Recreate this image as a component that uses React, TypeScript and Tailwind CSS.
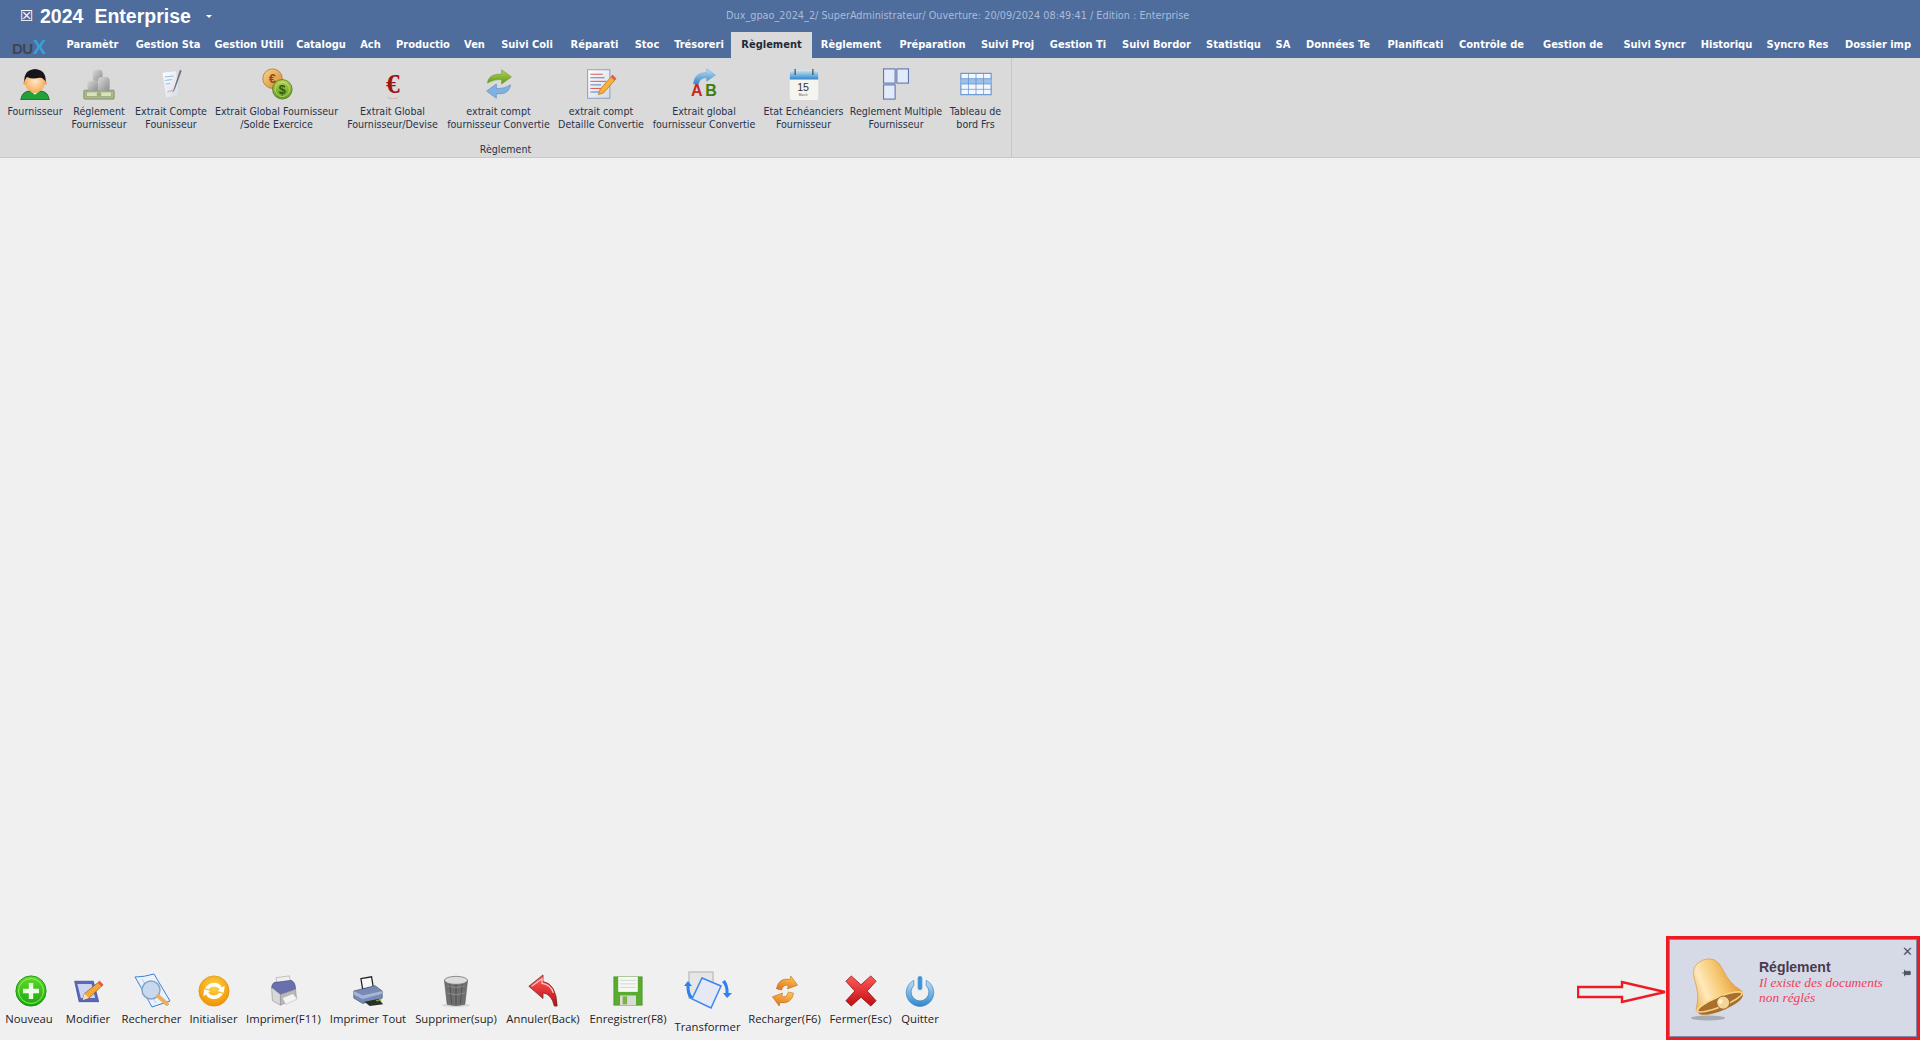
import React from "react";

const uiFont = "font-['DejaVu_Sans'] [font-stretch:condensed]";

const tabs = [
	{ label: "Paramètr", w: "w-[71px]" },
	{ label: "Gestion Sta", w: "w-[80px]" },
	{ label: "Gestion Utili", w: "w-[82px]" },
	{ label: "Catalogu", w: "w-[62px]" },
	{ label: "Ach", w: "w-[37px]" },
	{ label: "Productio", w: "w-[68px]" },
	{ label: "Ven", w: "w-[35px]" },
	{ label: "Suivi Coli", w: "w-[70px]" },
	{ label: "Réparati", w: "w-[65px]" },
	{ label: "Stoc", w: "w-[40px]" },
	{ label: "Trésoreri", w: "w-[64px]" },
	{ label: "Règlement", w: "w-[81px]", active: true },
	{ label: "Règlement", w: "w-[78px]" },
	{ label: "Préparation", w: "w-[85px]" },
	{ label: "Suivi Proj", w: "w-[65px]" },
	{ label: "Gestion Ti", w: "w-[76px]" },
	{ label: "Suivi Bordor", w: "w-[81px]" },
	{ label: "Statistiqu", w: "w-[73px]" },
	{ label: "SA", w: "w-[26px]" },
	{ label: "Données Te", w: "w-[84px]" },
	{ label: "Planificati", w: "w-[71px]" },
	{ label: "Contrôle de", w: "w-[81px]" },
	{ label: "Gestion de", w: "w-[82px]" },
	{ label: "Suivi Syncr", w: "w-[81px]" },
	{ label: "Historiqu", w: "w-[63px]" },
	{ label: "Syncro Res", w: "w-[79px]" },
	{ label: "Dossier imp", w: "w-[82px]" },
];

function Svg({ children, size = "w-8 h-8" }: { children: React.ReactNode; size?: string }) {
	return (
		<svg viewBox="0 0 36 36" className={size}>
			{children}
		</svg>
	);
}

function Defs() {
	return (
		<svg className="absolute w-0 h-0">
			<defs>
				<radialGradient id="face" cx="0.5" cy="0.4" r="0.6">
					<stop offset="0" stopColor="#ffe9c8" />
					<stop offset="1" stopColor="#f9a957" />
				</radialGradient>
				<linearGradient id="gold" x1="0" y1="0" x2="1" y2="1">
					<stop offset="0" stopColor="#f8d48c" />
					<stop offset="1" stopColor="#d28a2c" />
				</linearGradient>
				<linearGradient id="green" x1="0" y1="0" x2="0" y2="1">
					<stop offset="0" stopColor="#b5d34f" />
					<stop offset="1" stopColor="#5e9a1e" />
				</linearGradient>
				<linearGradient id="plus" x1="0" y1="0" x2="0" y2="1">
					<stop offset="0" stopColor="#5fdc2a" />
					<stop offset="1" stopColor="#16a80e" />
				</linearGradient>
				<radialGradient id="orange" cx="0.5" cy="0.35" r="0.7">
					<stop offset="0" stopColor="#ffd640" />
					<stop offset="1" stopColor="#f08c00" />
				</radialGradient>
				<linearGradient id="orangeArrow" x1="0" y1="0" x2="0" y2="1">
					<stop offset="0" stopColor="#fbc552" />
					<stop offset="1" stopColor="#e4761c" />
				</linearGradient>
				<linearGradient id="red" x1="0" y1="0" x2="0" y2="1">
					<stop offset="0" stopColor="#ff5a5a" />
					<stop offset="1" stopColor="#c00d12" />
				</linearGradient>
				<linearGradient id="blueP" x1="0" y1="0" x2="0" y2="1">
					<stop offset="0" stopColor="#bfe1f7" />
					<stop offset="1" stopColor="#2f86cc" />
				</linearGradient>
				<linearGradient id="grey" x1="0" y1="0" x2="1" y2="1">
					<stop offset="0" stopColor="#d9d9d9" />
					<stop offset="1" stopColor="#8c8c8c" />
				</linearGradient>
				<linearGradient id="bell" x1="0" y1="0" x2="1" y2="0">
					<stop offset="0" stopColor="#eeb552" />
					<stop offset="0.3" stopColor="#ffe9ba" />
					<stop offset="0.65" stopColor="#f6c873" />
					<stop offset="1" stopColor="#e29a34" />
				</linearGradient>
				<linearGradient id="paper" x1="0" y1="0" x2="1" y2="1">
					<stop offset="0" stopColor="#ffffff" />
					<stop offset="1" stopColor="#d3dae6" />
				</linearGradient>
			</defs>
		</svg>
	);
}

const Person = () => (
	<Svg>
		<path d="M2 36 Q3 27 11 26 L25 26 Q33 27 34 36 Z" fill="#22a03a" stroke="#0c4a18" strokeWidth="0.8" />
		<path d="M13 26 L18 30 L23 26 Z" fill="#e9f5d6" />
		<circle cx="18" cy="17" r="11" fill="url(#face)" />
		<circle cx="6.5" cy="17" r="2" fill="#f6a85a" />
		<circle cx="29.5" cy="17" r="2" fill="#f6a85a" />
		<path d="M6 16 Q5 2 18 1 Q31 2 30 16 Q27 10 23 11 Q15 13 9 10 Q7 12 6 16 Z" fill="#15151a" />
	</Svg>
);

const Coins = () => (
	<Svg>
		<rect x="1" y="25" width="34" height="10" rx="1" fill="#aab98a" stroke="#7d8c63" />
		<rect x="4" y="27" width="28" height="5" fill="#d8e3bb" stroke="#8a9a6e" strokeWidth="0.6" />
		<circle cx="18" cy="29.5" r="2.6" fill="#9bab7a" />
		<rect x="11" y="2" width="11" height="13" rx="4" fill="url(#grey)" />
		<rect x="5" y="14" width="12" height="12" rx="4" fill="url(#grey)" />
		<rect x="17" y="10" width="13" height="16" rx="4" fill="url(#grey)" />
	</Svg>
);

const PaperPen = () => (
	<Svg>
		<path d="M8 5 L24 3 L28 31 L12 34 Z" fill="url(#paper)" stroke="#d0d0d0" strokeWidth="0.6" />
		<path d="M11 10 L21 9 M11 14 L19 13 M12 18 L17 17.5" stroke="#8fb9d8" strokeWidth="1" />
		<path d="M28 2 L21 24 L19 28 L22 25 L30 3 Z" fill="#6c7480" />
		<path d="M14 27 L22 24" stroke="#e8a3b0" strokeWidth="1.2" />
	</Svg>
);

const CoinPair = () => (
	<Svg>
		<circle cx="13" cy="12" r="11" fill="url(#gold)" stroke="#b26c20" strokeWidth="0.8" />
		<text x="13" y="17" textAnchor="middle" fontSize="14" fontWeight="700" fill="#8c4a12" fontFamily="Liberation Sans">€</text>
		<circle cx="24" cy="24" r="11" fill="url(#green)" stroke="#456f18" strokeWidth="0.8" />
		<circle cx="24" cy="24" r="8" fill="none" stroke="#dbe98f" strokeWidth="0.7" />
		<text x="24" y="29" textAnchor="middle" fontSize="14" fontWeight="700" fill="#2f5a10" fontFamily="Liberation Sans">$</text>
	</Svg>
);

const Euro = () => (
	<Svg>
		<text x="18" y="28" textAnchor="middle" fontSize="31" fontWeight="700" fill="#9c1414" fontFamily="Liberation Serif">€</text>
		<path d="M11 32 Q18 36 25 32 L22 35 L14 35 Z" fill="#d7b3b3" />
	</Svg>
);

const Sync = () => (
	<Svg>
		<path d="M5 17 Q6 8 16 7 L21 7 L21 2 L32 10 L21 18 L21 13 L17 13 Q12 13 5 17 Z" fill="url(#green)" stroke="#6e9225" strokeWidth="0.6" />
		<path d="M31 19 Q30 28 20 29 L15 29 L15 34 L4 26 L15 18 L15 23 L19 23 Q24 23 31 19 Z" fill="#7fb1e3" stroke="#4d7fb8" strokeWidth="0.6" />
	</Svg>
);

const DocPencil = () => (
	<Svg>
		<rect x="3" y="2" width="25" height="32" fill="url(#paper)" stroke="#8796b5" />
		<path d="M6 7 L20 7 M6 15 L24 15 M6 23 L18 23" stroke="#d8453f" strokeWidth="1" />
		<path d="M6 11 L22 11 M6 19 L18 19 M6 27 L20 27" stroke="#4d6fb8" strokeWidth="1" />
		<path d="M31 8 L35 12 L21 28 L15 30 L17 24 Z" fill="#f5b13a" stroke="#a96a10" strokeWidth="0.7" />
		<path d="M31 8 L35 12 L33 14 L29 10 Z" fill="#e8584f" />
	</Svg>
);

const AB = () => (
	<Svg>
		<path d="M6 18 Q7 5 21 5 L21 1 L31 8 L21 15 L21 11 Q13 11 12 18 Z" fill="url(#blueP)" stroke="#6a9cc5" strokeWidth="0.5" />
		<text x="10" y="32" textAnchor="middle" fontSize="18" fontWeight="700" fill="#c22a22" fontFamily="Liberation Sans">A</text>
		<text x="26" y="32" textAnchor="middle" fontSize="18" fontWeight="700" fill="#3f7d12" fontFamily="Liberation Sans">B</text>
	</Svg>
);

const Calendar = () => (
	<Svg>
		<rect x="2" y="3" width="32" height="33" rx="2" fill="#f5f5f0" />
		<path d="M2 5 Q2 3 4 3 L32 3 Q34 3 34 5 L34 13 L2 13 Z" fill="url(#blueP)" />
		<path d="M8 1 L8 8 M28 1 L28 8" stroke="#3b3b3b" strokeWidth="1.2" />
		<text x="17" y="26" textAnchor="middle" fontSize="12" fill="#333" fontFamily="Liberation Sans">15</text>
		<text x="17" y="32" textAnchor="middle" fontSize="3.5" fill="#555" fontFamily="Liberation Sans">March</text>
	</Svg>
);

const Squares = () => (
	<Svg>
		<rect x="4" y="1" width="13" height="16" fill="#e3ebfa" stroke="#5a72ae" strokeWidth="1.2" />
		<rect x="19" y="1" width="13" height="16" fill="#e3ebfa" stroke="#5a72ae" strokeWidth="1.2" />
		<rect x="4" y="19" width="13" height="16" fill="#e3ebfa" stroke="#5a72ae" strokeWidth="1.2" />
	</Svg>
);

const Table = () => (
	<Svg>
		<rect x="1" y="6" width="34" height="24" fill="#f3f7fd" stroke="#5c90cf" strokeWidth="1.2" />
		<rect x="1" y="12" width="34" height="6" fill="#9cc0ea" />
		<path d="M1 12 L35 12 M1 18 L35 18 M1 24 L35 24 M9.5 6 L9.5 30 M18 6 L18 30 M26.5 6 L26.5 30" stroke="#5c90cf" strokeWidth="0.8" />
	</Svg>
);

const Plus = () => (
	<Svg>
		<circle cx="18" cy="18" r="17" fill="url(#plus)" stroke="#18920c" strokeWidth="1" />
		<circle cx="18" cy="18" r="14" fill="none" stroke="#a8ec6a" strokeWidth="1" />
		<path d="M18 9 L18 27 M9 18 L27 18" stroke="#eefbe8" strokeWidth="5" />
	</Svg>
);

const EditNote = () => (
	<Svg>
		<path d="M3 7 L24 7 L30 30 L8 30 Z" fill="#5b66bd" stroke="#3b4690" strokeWidth="0.8" />
		<path d="M6 10 L22 10 L26 26 L10 26 Z" fill="#cdd4f2" />
		<path d="M31 7 L35 11 L19 26 L12 28 L14 21 Z" fill="#f4a83a" stroke="#99620f" strokeWidth="0.8" />
		<path d="M31 7 L35 11 L33 13 L29 9 Z" fill="#e8564b" />
		<path d="M14 21 L12 28 L19 26 Z" fill="#f3e1bd" />
	</Svg>
);

const SearchIcon = () => (
	<Svg size="w-[38px] h-9">
		<path d="M1 4 Q10 4 20 1 L36 28 L18 34 Z" fill="#eaf2fb" stroke="#3f7fdc" strokeWidth="1" />
		<path d="M4 8 L16 30 M8 6 L22 30" stroke="#9cbde6" strokeWidth="0.7" />
		<circle cx="17" cy="17" r="9" fill="#c8d9ef" stroke="#8aa4c8" strokeWidth="1.5" />
		<path d="M24 23 L33 31" stroke="#e8b060" strokeWidth="4" strokeLinecap="round" />
	</Svg>
);

const Reset = () => (
	<Svg>
		<circle cx="18" cy="18" r="17" fill="url(#orange)" stroke="#d69a1c" strokeWidth="0.8" />
		<path d="M8 15 Q12 8 20 9 Q25 10 27 14 L30 12 L29 20 L22 18 L24.5 16 Q22 13 18 13 Q14 13 12 16 Z" fill="#fff" />
		<path d="M28 21 Q24 28 16 27 Q11 26 9 22 L6 24 L7 16 L14 18 L11.5 20 Q14 23 18 23 Q22 23 24 20 Z" fill="#fff" />
	</Svg>
);

const PrinterOne = () => (
	<Svg>
		<path d="M9 3 L24 1 L26 10 L11 13 Z" fill="#eeeeee" stroke="#9a9a9a" strokeWidth="0.6" />
		<path d="M4 14 Q5 7 11 8 L26 6 Q31 8 31 16 L14 22 Z" fill="#6a6fb0" stroke="#43467c" strokeWidth="0.6" />
		<path d="M4 14 L14 22 L14 34 L5 29 Z" fill="#d8d8d8" stroke="#888" strokeWidth="0.6" />
		<path d="M14 22 L31 16 L32 26 L14 34 Z" fill="#b9b9b9" stroke="#888" strokeWidth="0.6" />
		<path d="M16 26 L28 21 L33 27 L20 33 Z" fill="#f4f4f4" stroke="#aaa" strokeWidth="0.5" />
	</Svg>
);

const PrinterTwo = () => (
	<Svg>
		<path d="M10 4 L22 2 L24 14 L12 16 Z" fill="#f7f7f7" stroke="#222" strokeWidth="1.4" />
		<path d="M2 18 L26 12 L34 18 L34 26 L12 32 L2 26 Z" fill="#7789b5" stroke="#3c4766" strokeWidth="0.7" />
		<path d="M2 18 L12 23 L34 18 L34 21 L12 27 L2 22 Z" fill="#a8b6d4" />
		<path d="M14 30 L30 27 L35 33 L20 35 Z" fill="#2b3026" />
		<path d="M27 29 L33 28" stroke="#7c9a3a" strokeWidth="1.5" />
	</Svg>
);

const Trash = () => (
	<Svg>
		<ellipse cx="18" cy="34" rx="16" ry="2" fill="#d8d8d8" />
		<path d="M5 6 L31 6 L28 33 Q18 36 8 33 Z" fill="#6f6f6f" stroke="#555" strokeWidth="0.6" />
		<path d="M11 10 L13 32 M18 10 L18 33 M25 10 L23 32" stroke="#4a4a4a" strokeWidth="1" />
		<path d="M8 12 Q18 16 28 12 M8 20 Q18 24 28 20" stroke="#9a9a9a" strokeWidth="0.8" fill="none" />
		<ellipse cx="18" cy="6" rx="13" ry="4.5" fill="#dcdcdc" stroke="#6b6b6b" strokeWidth="0.8" />
	</Svg>
);

const Back = () => (
	<Svg size="w-[34px] h-[34px]">
		<path d="M3 13 L18 1 L18 8 Q32 10 33 34 L30 34 Q27 21 18 20 L18 26 Z" fill="url(#red)" stroke="#6d2a2a" strokeWidth="0.8" />
		<path d="M6 13 L17 5 L17 10 Q26 11 29 20" stroke="#ffc3c3" strokeWidth="1.4" fill="none" />
	</Svg>
);

const Floppy = () => (
	<Svg>
		<path d="M2 2 L34 2 L34 34 L2 34 Z" fill="#58ad2e" stroke="#3f7f1f" strokeWidth="0.6" />
		<rect x="7" y="2" width="22" height="17" fill="#f6f8f4" />
		<path d="M9 6 L27 6 M9 10 L27 10 M9 14 L27 14" stroke="#cfd3cf" strokeWidth="1" />
		<rect x="9" y="23" width="18" height="11" fill="#d9dcd6" />
		<rect x="12" y="24" width="5" height="9" fill="#7ab344" />
	</Svg>
);

const Transform = () => (
	<svg viewBox="0 0 50 40" className="w-[50px] h-[40px]">
		<rect x="6" y="1" width="24" height="26" fill="#e6e6e6" stroke="#c2c2c2" strokeWidth="1.5" />
		<path d="M19 7 L38 15 L28 37 L9 28 Z" fill="#e4e9f4" stroke="#3d85f0" strokeWidth="1.5" />
		<path d="M1 15 L5 10 L9 15 L6.5 15 Q6 22 10 26 L7 28 Q3 22 3.5 15 Z" fill="#2f80f0" />
		<path d="M49 22 L44 27 L40 22 L42.5 22 Q43 15 39 11 L42 9 Q46 15 45.5 22 Z" fill="#2f80f0" />
	</svg>
);

const Reload = () => (
	<Svg>
		<path d="M8 18 Q7 5 20 4 L20 0 L30 8 L20 15 L20 11 Q14 11 14 18 Z" transform="rotate(15 18 18)" fill="url(#orangeArrow)" stroke="#b8691c" strokeWidth="0.6" />
		<path d="M28 18 Q29 31 16 32 L16 36 L6 28 L16 21 L16 25 Q22 25 22 18 Z" transform="rotate(15 18 18)" fill="url(#orangeArrow)" stroke="#b8691c" strokeWidth="0.6" />
	</Svg>
);

const RedX = () => (
	<Svg>
		<path d="M7 1 L18 11 L29 1 L35 7 L25 18 L35 29 L29 35 L18 25 L7 35 L1 29 L11 18 L1 7 Z" fill="url(#red)" stroke="#8d0d10" strokeWidth="0.8" />
	</Svg>
);

const Power = () => (
	<Svg>
		<path d="M11 6 A15.5 15.5 0 1 0 25 6 L25 12 A10 10 0 1 1 11 12 Z" fill="url(#blueP)" stroke="#2f7cc0" strokeWidth="0.7" />
		<rect x="15.5" y="1" width="5" height="16" rx="2.5" fill="#3f92d8" stroke="#9cc9ec" strokeWidth="0.6" />
	</Svg>
);

const ribbonItems = [
	{ lines: ["Fournisseur"], w: "w-[64px]", Icon: Person },
	{ lines: ["Réglement", "Fournisseur"], w: "w-[64px]", Icon: Coins },
	{ lines: ["Extrait Compte", "Founisseur"], w: "w-[80px]", Icon: PaperPen },
	{ lines: ["Extrait Global Fournisseur", "/Solde Exercice"], w: "w-[131px]", Icon: CoinPair },
	{ lines: ["Extrait Global", "Fournisseur/Devise"], w: "w-[101px]", Icon: Euro },
	{ lines: ["extrait compt", "fournisseur Convertie"], w: "w-[111px]", Icon: Sync },
	{ lines: ["extrait compt", "Detaille Convertie"], w: "w-[94px]", Icon: DocPencil },
	{ lines: ["Extrait global", "fournisseur Convertie"], w: "w-[112px]", Icon: AB },
	{ lines: ["Etat Echéanciers", "Fournisseur"], w: "w-[87px]", Icon: Calendar },
	{ lines: ["Reglement Multiple", "Fournisseur"], w: "w-[98px]", Icon: Squares },
	{ lines: ["Tableau de", "bord Frs"], w: "w-[61px]", Icon: Table },
];

const toolItems = [
	{ label: "Nouveau", w: "w-[58px]", Icon: Plus, shift: "ml-[3px]" },
	{ label: "Modifier", w: "w-[60px]", Icon: EditNote, shift: "" },
	{ label: "Rechercher", w: "w-[67px]", Icon: SearchIcon, shift: "" },
	{ label: "Initialiser", w: "w-[57px]", Icon: Reset, shift: "" },
	{ label: "Imprimer(F11)", w: "w-[83px]", Icon: PrinterOne, shift: "" },
	{ label: "Imprimer Tout", w: "w-[86px]", Icon: PrinterTwo, shift: "" },
	{ label: "Supprimer(sup)", w: "w-[90px]", Icon: Trash, shift: "" },
	{ label: "Annuler(Back)", w: "w-[84px]", Icon: Back, shift: "" },
	{ label: "Enregistrer(F8)", w: "w-[86px]", Icon: Floppy, shift: "" },
	{ label: "Transformer", w: "w-[73px]", Icon: Transform, shift: "", low: true },
	{ label: "Recharger(F6)", w: "w-[81px]", Icon: Reload, shift: "" },
	{ label: "Fermer(Esc)", w: "w-[71px]", Icon: RedX, shift: "" },
	{ label: "Quitter", w: "w-[48px]", Icon: Power, shift: "" },
];

function Toast() {
	return (
		<div className="absolute right-0 bottom-0 w-[254px] h-[104px] border-[3px] border-[#ed1c24]">
			<div className="relative flex w-full h-full bg-[#d6dae6] border border-[#7f8aa8] pl-[14px]">
				<div className="absolute top-[3px] left-[112px] w-6 h-[5px] bg-[radial-gradient(#555_40%,transparent_45%)] bg-[length:2px_2px]"></div>
				<svg viewBox="0 0 60 66" className="w-[60px] h-[66px] mt-[16px] shrink-0">
					<ellipse cx="24" cy="62" rx="17" ry="2.5" fill="#8c8c8c" opacity="0.6" />
					<g transform="rotate(-22 30 32)">
						<path d="M30 2 Q16 2 15 18 Q14 34 6 44 Q4 48 8 50 L52 50 Q56 48 54 44 Q46 34 45 18 Q44 2 30 2 Z" fill="url(#bell)" stroke="#d9983a" strokeWidth="0.6" />
						<ellipse cx="30" cy="49" rx="24" ry="7" fill="#a8702a" />
						<ellipse cx="30" cy="47" rx="24" ry="5" fill="none" stroke="#fbd68e" strokeWidth="1.6" />
						<circle cx="33" cy="49" r="6.5" fill="#f5d596" stroke="#94662a" strokeWidth="0.8" />
						<circle cx="31" cy="47" r="2.2" fill="#fff4d8" />
					</g>
				</svg>
				<div className="ml-[15px] mt-[19px] flex flex-col">
					<span className="font-['Liberation_Sans'] font-bold text-[14px] leading-[16px] text-[#4a3a50]">Réglement</span>
					<span className="font-['Liberation_Serif'] italic text-[13.4px] leading-[15px] text-[#f0405a] w-[135px]">
						Il existe des documents non réglés
					</span>
				</div>
				<span className="absolute top-[5px] right-[3px] text-[#4e5563] font-['DejaVu_Sans'] font-bold text-[13px] leading-[14px]">✕</span>
				<svg viewBox="0 0 12 10" className="absolute top-[29px] right-[4px] w-[10px] h-2">
					<path d="M0 5 L3 5 M3 1 L3 9 M3 3 L10 3 L10 7 L3 7 Z" stroke="#4e5563" strokeWidth="1.2" fill="#4e5563" />
				</svg>
			</div>
		</div>
	);
}

function AnnotationArrow() {
	return (
		<svg viewBox="0 0 90 24" className="absolute left-[1577px] bottom-[36px] w-[90px] h-6">
			<path d="M1 7 L45 7 L45 2 L88 12 L45 22 L45 17 L1 17 Z" fill="none" stroke="#ed1c24" strokeWidth="2.4" />
		</svg>
	);
}

export default function App() {
	return (
		<div className="relative flex flex-col w-[1920px] h-[1040px] overflow-hidden bg-[#f0f0f0]">
			<Defs />
			<div className="h-[58px] bg-[#4e6c9c] flex flex-col">
				<div className="flex items-center h-[32px]">
					<div className="flex items-center w-[726px] pl-[20px] text-white font-['Liberation_Sans'] font-bold">
						<span className="font-['DejaVu_Sans'] font-normal text-[15px] leading-[20px] w-5">☒</span>
						<span className="text-[19.5px] leading-[24px]">2024</span>
						<span className="text-[19.5px] leading-[24px] ml-[11px]">Enterprise</span>
						<span className="ml-[15px] w-0 h-0 border-x-[3px] border-x-transparent border-t-[3px] border-t-white"></span>
					</div>
					<span className={`${uiFont} text-[10.8px] text-[#a9bcd9] whitespace-nowrap`}>
						Dux_gpao_2024_2/ SuperAdministrateur/ Ouverture: 20/09/2024 08:49:41 / Edition : Enterprise
					</span>
				</div>
				<div className="flex h-[26px]">
					<div className="w-[57px] pl-[12px] pt-[6px] font-['Liberation_Sans'] font-bold text-[15px] leading-[18px] tracking-[-0.5px]">
						<span className="text-[#3f4652]">DU</span>
						<span className="text-[#3b9fd6] text-[20px]">X</span>
					</div>
					{tabs.map((tab, i) => (
						<div
							key={i}
							className={`${tab.w} ${uiFont} flex items-center justify-center font-bold text-[11px] whitespace-nowrap ${
								tab.active ? "bg-[#dadada] text-[#1f2a38]" : "text-white"
							}`}
						>
							{tab.label}
						</div>
					))}
				</div>
			</div>

			<div className="h-[100px] bg-[#dadada] border-b border-[#c8c8c8] flex">
				<div className="w-[1012px] border-r border-[#c6c6c6] flex flex-col">
					<div className="flex h-[84px] pl-[3px]">
						{ribbonItems.map((item, i) => (
							<div key={i} className={`${item.w} flex flex-col items-center pt-[9px]`}>
								<div className="flex items-center justify-center h-[34px] mb-[4px]">
									<item.Icon />
								</div>
								{item.lines.map((line) => (
									<span key={line} className={`${uiFont} text-[10.6px] leading-[13px] text-[#26324a] whitespace-nowrap`}>
										{line}
									</span>
								))}
							</div>
						))}
					</div>
					<div className={`${uiFont} text-center text-[10.6px] leading-[14px] text-[#26324a]`}>Règlement</div>
				</div>
			</div>

			<div className="flex-1"></div>

			<div className="flex h-[75px] pt-[8px]">
				{toolItems.map((item, i) => (
					<div key={i} className={`${item.w} flex flex-col items-center`}>
						<div className={`flex items-center justify-center h-[36px] mb-[2px] ${item.shift}`}>
							<item.Icon />
						</div>
						<span
							className={`font-['Open_Sans'] text-[11.3px] leading-[16px] text-[#1c1c28] whitespace-nowrap ${
								item.low ? "mt-[8px]" : "mt-0"
							}`}
						>
							{item.label}
						</span>
					</div>
				))}
			</div>

			<AnnotationArrow />
			<Toast />
		</div>
	);
}
